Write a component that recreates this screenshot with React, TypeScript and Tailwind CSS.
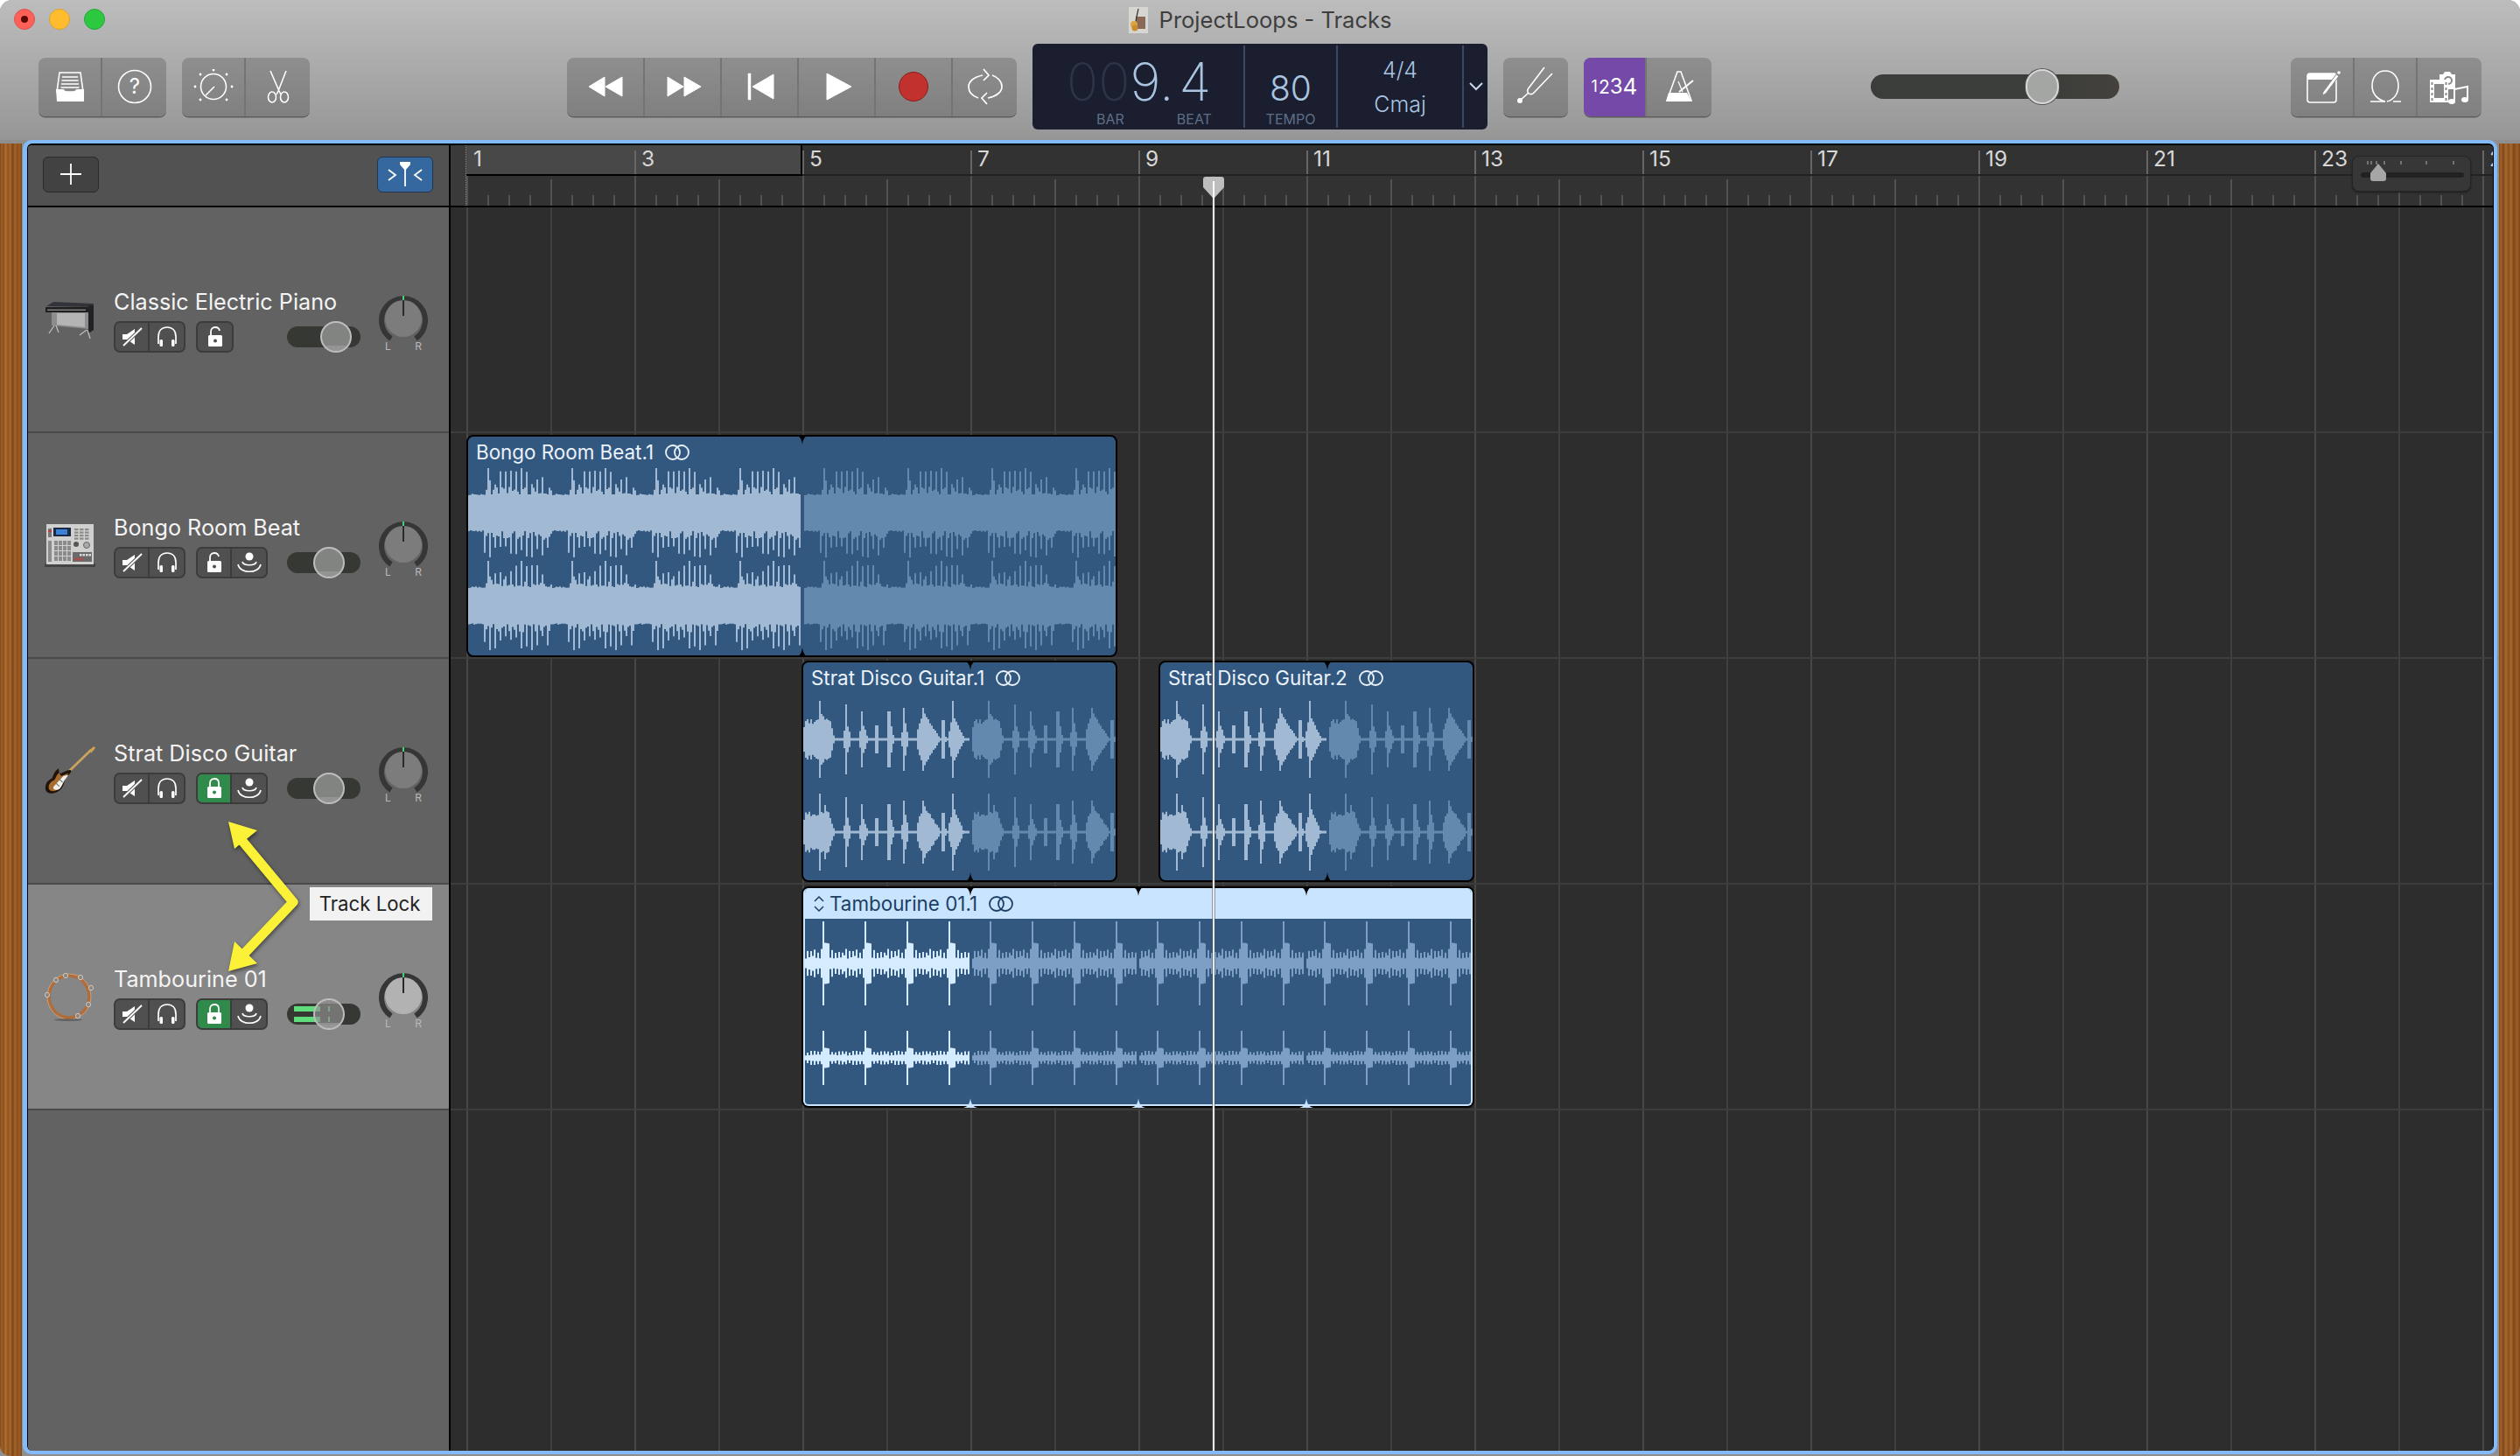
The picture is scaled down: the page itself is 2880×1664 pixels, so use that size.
import React from 'react';

type Profile = { up: number; down: number }[];

const rng = (seed: number) => {
  let s = seed;
  return () => {
    s = (s * 16807) % 2147483647;
    return s / 2147483647;
  };
};

const bongoProfile = (seed: number): Profile => {
  const r = rng(seed);
  const out: Profile = [];
  for (let j = 0; j < 48; j++) {
    const px = j * 2;
    const notch = px < 20 || (px > 66 && px < 72) || (px > 86 && px < 92);
    const lowNotch = px < 18 || (px > 62 && px < 66);
    const comb = j % 3 === 0;
    let up = notch ? 20 + r() * 2 : comb ? 32 + r() * 16 : 21 + r() * 9;
    let down = lowNotch ? 20 + r() * 2 : comb ? 34 + r() * 16 : 21 + r() * 10;
    if (px === 22 || px === 60) up = 51;
    if (px === 24 || px === 72) down = 51;
    out.push({ up, down });
  }
  return out;
};

const stratBursts = [
  [0, 36, 27, 44],
  [46, 54, 24, 40],
  [64, 73, 22, 32],
  [82, 86, 10, 16],
  [95, 103, 26, 32],
  [112, 120, 26, 36],
  [130, 156, 30, 36],
  [158, 163, 14, 22],
  [166, 183, 28, 44],
];

const stratProfile = (seed: number): Profile => {
  const r = rng(seed);
  const out: Profile = [];
  for (let j = 0; j < 96; j++) {
    const px = j * 2;
    let amp = 1.5;
    stratBursts.forEach(([a, b, body, peak], n) => {
      if (px >= a && px < b) {
        const t = (px - a) / (b - a);
        // first burst holds its body, the others are sharp attacks with a long tail
        const shape = n === 0
          ? (t < 0.75 ? 0.7 + t * 0.4 : 1 - (t - 0.75) * 3.4)
          : (t < 0.25 ? 0.35 + t * 2.6 : 1 - (t - 0.25) * 1.25);
        amp = Math.max(amp, body * shape + (r() - 0.5) * (n === 0 ? 10 : 4));
        if (Math.abs(t - (n === 0 ? 0.5 : 0.25)) < 2 / (b - a) / 1.5) amp = peak;
      }
    });
    out.push({ up: amp, down: amp });
  }
  return out;
};

const tambProfile = (seed: number, body: number, spike: number): Profile => {
  const r = rng(seed);
  const out: Profile = [];
  for (let j = 0; j < 24; j++) {
    const px = j * 2;
    let amp = j % 2 === 0 ? body * (0.35 + r() * 0.3) : body * (0.75 + r() * 0.35);
    if (px === 20) amp = spike;
    else if (px > 20 && px < 28) amp = Math.max(amp, body * 1.5 - (px - 20) * 0.2);
    out.push({ up: amp, down: amp });
  }
  return out;
};

const wavePath = (p: Profile, step: number, from: number, to: number, cy: number) => {
  let d = '';
  for (let x = from, i = 0; x + step <= to; x += step, i++) {
    const c = p[i % p.length];
    d += `M${x} ${(cy - c.up).toFixed(1)}h${step}V${(cy + c.down).toFixed(1)}h${-step}Z`;
  }
  return d;
};

const Wave = ({ width, height, seg, step, channels, colorA, colorB }: {
  width: number;
  height: number;
  seg: number;
  step: number;
  channels: { p: Profile; cy: number }[];
  colorA: string;
  colorB: string;
}) => (
  <svg className="absolute left-0 top-0" width={width} height={height}>
    {channels.map((c, i) => (
      <g key={i}>
        <path d={wavePath(c.p, step, 0, seg - 1, c.cy)} fill={colorA} />
        {Array.from({ length: Math.ceil((width - seg) / seg) }).map((_, k) => (
          <path
            key={k}
            d={wavePath(c.p, step, seg + 2 + k * (seg + 2), Math.min(width, seg + (k + 1) * (seg + 2)), c.cy)}
            fill={colorB}
          />
        ))}
      </g>
    ))}
  </svg>
);

const LoopRings = ({ color }: { color: string }) => (
  <svg width="30" height="20" viewBox="0 0 30 20" fill="none" stroke={color} strokeWidth="1.8">
    <circle cx="10" cy="10" r="8" />
    <circle cx="20" cy="10" r="8" />
  </svg>
);

const Notch = ({ x, side, color }: { x: number; side: 'top' | 'bottom'; color: string }) => (
  <svg
    className={side === 'top' ? 'absolute -top-[2px]' : 'absolute -bottom-[2px]'}
    style={{ left: x - 8 }}
    width="16"
    height="11"
    viewBox="0 0 16 11"
  >
    {side === 'top' ? <path d="M0 0h16c-4 1-7 3-8 11C7 3 4 1 0 0z" fill={color} /> : <path d="M0 11h16c-4-1-7-3-8-11C7 8 4 10 0 11z" fill={color} />}
  </svg>
);

/* ---------- toolbar icons ---------- */

const InboxIcon = () => (
  <svg width="32" height="34" viewBox="0 0 32 34" fill="none" stroke="white" strokeWidth="1.6">
    <path d="M4 1h24l3 22H1z" />
    <path d="M7 6h18M6.500 10h19M6 14h20M5.500 18h21" />
    <path d="M0 20h9c1 4 13 4 14 0h9v14H1z" fill="white" stroke="none" />
  </svg>
);

const HelpIcon = () => (
  <svg width="40" height="40" viewBox="0 0 40 40" fill="none">
    <circle cx="20" cy="20" r="18.500" stroke="white" strokeWidth="1.6" />
    <text x="20" y="28" textAnchor="middle" fontSize="24" fontFamily="Inter, sans-serif" fill="white">?</text>
  </svg>
);

const DialIcon = () => (
  <svg width="46" height="40" viewBox="0 0 46 40" fill="none" stroke="white">
    <circle cx="23" cy="20" r="14.500" strokeWidth="1.6" />
    <path d="M14 30l10-10" strokeWidth="1.6" />
    {[[23, 1], [8, 6], [38, 6], [2, 20], [44, 20], [8, 35], [38, 35]].map(([x, y], i) => (
      <circle key={i} cx={x} cy={y} r="1.4" fill="white" stroke="none" />
    ))}
  </svg>
);

const ScissorsIcon = () => (
  <svg width="28" height="38" viewBox="0 0 28 38" fill="none" stroke="white" strokeWidth="1.6">
    <path d="M5 1l10 23 2 4M23 1l-9 23-2 4" />
    <ellipse cx="7" cy="31" rx="4.500" ry="6" />
    <ellipse cx="21" cy="31" rx="4.500" ry="6" />
  </svg>
);

const RewindIcon = () => (
  <svg width="40" height="24" viewBox="0 0 40 24" fill="white" stroke="white" strokeLinejoin="round">
    <path d="M1 12L19 1v22z" />
    <path d="M20 12L39 1v22z" />
  </svg>
);

const ForwardIcon = () => (
  <svg className="ml-[3px]" width="40" height="24" viewBox="0 0 40 24" fill="white" stroke="white" strokeLinejoin="round">
    <path d="M1 1l18 11L1 23z" />
    <path d="M20 1l19 11-19 11z" />
  </svg>
);

const ToStartIcon = () => (
  <svg className="ml-[3px]" width="32" height="32" viewBox="0 0 32 32" fill="white" stroke="white" strokeLinejoin="round">
    <rect x="1" y="1" width="3" height="30" strokeWidth="0.5" />
    <path d="M6 16L30 2v28z" />
  </svg>
);

const PlayIcon = () => (
  <svg className="ml-[5px]" width="30" height="32" viewBox="0 0 30 32" fill="white" stroke="white" strokeLinejoin="round">
    <path d="M1 1l28 15L1 31z" />
  </svg>
);

const CycleIcon = () => (
  <svg width="40" height="42" viewBox="0 0 40 42" fill="none" stroke="white" strokeWidth="1.7">
    <path d="M17 8C7 10 1 15 1 21c0 7 5 11 11 13" />
    <path d="M23 34c10-2 16-7 16-13 0-6-5-11-11-13" />
    <path d="M18 1l6 7-6 6M22 28l-6 6 6 7" />
  </svg>
);

const ForkIcon = () => (
  <svg className="ml-[5px]" width="50" height="46" viewBox="0 0 50 46" fill="none" stroke="white" strokeWidth="1.6">
    <path d="M13 26L32 1M19 31L41 8" />
    <path d="M13 26c-1 4 2 7 6 5" />
    <path d="M14 30l-9 8" />
    <circle cx="4" cy="39" r="3" fill="white" stroke="none" />
  </svg>
);

const MetronomeIcon = () => (
  <svg className="ml-[2px]" width="32" height="36" viewBox="0 0 32 36" fill="none" stroke="white" strokeWidth="1.6">
    <path d="M13 1h4l12 33H1z" />
    <path d="M0 35l3-10h21l5 10z" fill="white" stroke="none" />
    <path d="M15 24l16-13" strokeWidth="2" />
    <path d="M14 12l5 12" strokeWidth="1.2" />
  </svg>
);

const NoteIcon = () => (
  <svg className="ml-[5px]" width="40" height="38" viewBox="0 0 40 38" fill="none" stroke="white" strokeWidth="1.6">
    <rect x="1" y="4" width="33" height="33" rx="3" />
    <path d="M1 7a3 3 0 013-3h26a4 4 0 014 3v4H1z" fill="white" stroke="none" />
    <path d="M19 25l15-20 3 2-15 20-4 2z" fill="white" stroke="#888" strokeWidth="1" />
    <circle cx="37" cy="3" r="1.8" fill="white" stroke="none" />
  </svg>
);

const LoopsIcon = () => (
  <svg className="ml-[2px]" width="38" height="38" viewBox="0 0 38 38" fill="none" stroke="white" strokeWidth="1.6">
    <path d="M18 36C9 34 3 27 3 18 3 8 9 1 18 1s15 7 15 17c0 9-5 16-13 18" />
    <path d="M1 36h17M27 36h9" />
  </svg>
);

const MediaIcon = () => (
  <svg className="-ml-[2px]" width="46" height="40" viewBox="0 0 46 40" fill="none">
    <path d="M12 6h4l2-3h6l2 3h4v17H12z" fill="white" />
    <circle cx="22" cy="13" r="5" fill="#8a8a8a" />
    <circle cx="22" cy="13" r="3" fill="white" />
    <path d="M1 12h21v26H1z" fill="white" />
    <rect x="6" y="17" width="11" height="16" fill="#8a8a8a" />
    <path d="M2.500 15h2v3h-2zM2.500 21h2v3h-2zM2.500 27h2v3h-2zM2.500 33h2v3h-2zM18.500 15h2v3h-2zM18.500 21h2v3h-2zM18.500 27h2v3h-2zM18.500 33h2v3h-2z" fill="#8a8a8a" />
    <path d="M29 23l15-3v15" stroke="white" strokeWidth="2" />
    <path d="M29 23v14" stroke="white" strokeWidth="2" />
    <ellipse cx="26" cy="37" rx="4" ry="3" fill="white" />
    <ellipse cx="41" cy="35" rx="4" ry="3" fill="white" />
  </svg>
);

const DocIcon = () => (
  <svg width="22" height="30" viewBox="0 0 22 30">
    <rect width="22" height="30" fill="#d8d6d2" />
    <rect x="8" y="11" width="11" height="14" fill="#8a6a55" />
    <path d="M11 2L8 16" stroke="#333" strokeWidth="1.2" />
    <circle cx="6" cy="20" r="4" fill="#d9a441" />
    <circle cx="7" cy="24" r="3.500" fill="#c98c2e" />
  </svg>
);

/* ---------- track icons ---------- */

const MuteIcon = () => (
  <svg width="24" height="22" viewBox="0 0 24 22" fill="white">
    <path d="M1 8h5l9-6v18l-9-6H1z" />
    <path d="M2 21L23 1" stroke="#555" strokeWidth="4" />
    <path d="M2 21L23 1" stroke="white" strokeWidth="1.8" />
  </svg>
);

const HeadphonesIcon = () => (
  <svg width="24" height="24" viewBox="0 0 24 24" fill="none" stroke="white" strokeWidth="1.7">
    <path d="M2 20v-8C2 5 6 1 12 1s10 4 10 11v8" />
    <rect x="3.500" y="15" width="3.500" height="8" rx="1.500" fill="white" stroke="none" />
    <rect x="17" y="15" width="3.500" height="8" rx="1.500" fill="white" stroke="none" />
  </svg>
);

const LockIcon = ({ open, dot }: { open: boolean; dot: string }) => (
  <svg width="18" height="24" viewBox="0 0 18 24" fill="none">
    <path d={open ? 'M4 11V6c0-3 2-5 5-5 2.500 0 4.500 1.500 5 4' : 'M4 11V6c0-3 2-5 5-5s5 2 5 5v5'} stroke="white" strokeWidth="1.8" />
    <rect x="1" y="10" width="16" height="13" rx="1.500" fill="white" />
    <circle cx="9" cy="16.500" r="2" fill={dot} />
  </svg>
);

const InputIcon = () => (
  <svg width="28" height="24" viewBox="0 0 28 24" fill="none" stroke="white" strokeWidth="1.6">
    <circle cx="14" cy="5" r="4.500" fill="white" stroke="none" />
    <path d="M6 11c1 5 15 5 16 0" />
    <path d="M1 14c2 11 24 11 26 0" />
  </svg>
);

const PianoIcon = () => (
  <svg width="58" height="44" viewBox="0 0 58 44">
    <path d="M2 6L10 1l46 2v4z" fill="#33343a" />
    <path d="M1 7h55v6H1z" fill="#1f1f22" />
    <path d="M3 9.500h44v1.500H3z" fill="#7f7f7f" />
    <path d="M8 13h42v19L8 28z" fill="#8d8d8d" />
    <path d="M14 14h32v16l-32-3z" fill="#b4b4b4" />
    <path d="M50 5h6v28l-6 4z" fill="#222226" />
    <path d="M11 28L5 37M13 28l3 8M49 33l3 10M48 33l-8 6" stroke="#bcbcbc" strokeWidth="1.300" fill="none" />
  </svg>
);

const PadsIcon = () => (
  <svg width="58" height="52" viewBox="0 0 58 52">
    <rect x="0" y="46" width="58" height="4" fill="#444" />
    <rect x="2" y="1" width="54" height="46" fill="#d0d0ce" />
    <rect x="10" y="5" width="20" height="10" fill="#1a2a44" />
    <rect x="13" y="7" width="13" height="6" fill="#3b82d6" />
    <rect x="4" y="6" width="4" height="10" fill="#777" />
    <rect x="4" y="8" width="4" height="2" fill="#c23b3b" />
    <g fill="#8b8b8b">
      {[0, 1, 2, 3].flatMap((r) =>
        [0, 1, 2, 3].map((c) => <rect key={`${r}-${c}`} x={11 + c * 5} y={20 + r * 6} width="4" height="5" />)
      )}
      {[0, 1, 2, 3].flatMap((r) =>
        [0, 1, 2].map((c) => <rect key={`k${r}-${c}`} x={34 + c * 6} y={6 + r * 3.5} width="4.500" height="2.200" />)
      )}
      <rect x="4" y="20" width="4" height="24" />
    </g>
    <circle cx="36" cy="24" r="3" fill="#555" />
    <circle cx="48" cy="25" r="3.500" fill="#aaa" stroke="#666" />
    <rect x="32" y="33" width="22" height="11" fill="#6a6a6a" />
    <g fill="#ddd">
      {[0, 1, 2, 3].map((c) => <rect key={c} x={40 + c * 3.5} y="35" width="2.500" height="2.500" />)}
    </g>
    <g fill="#b44">
      {[0, 1, 2].map((c) => <rect key={c} x={34 + c * 3.5} y="39.500" width="2.500" height="3" />)}
    </g>
  </svg>
);

const GuitarIcon = () => (
  <svg width="64" height="64" viewBox="0 0 64 64">
    <path d="M26 36L58 5" stroke="#c9a35e" strokeWidth="3" />
    <path d="M55 6l6-5 2 2-5 6z" fill="#d0a24f" />
    <path d="M2 52c0-7 4-10 8-12 2-4 3-9 8-12 1 3 0 5 2 6 4-1 9-5 13-4 2 2-3 6-6 9-3 4-1 8-5 13-6 8-20 9-20 0z" fill="#22140c" />
    <path d="M6 51c0-5 4-8 7-9 2-3 3-7 6-9 1 2 1 4 3 4 3-1 6-3 8-3-1 3-5 5-6 8-2 4-1 7-5 10-5 5-13 5-13-1z" fill="#a86c2c" />
    <path d="M12 50l12-13 6-1-5 7-3 6c-2 4-5 6-8 5-2-1-3-2-2-4z" fill="#f1f0ea" />
    <path d="M19 41l4 4M15 46l4 4" stroke="#777" strokeWidth="1.300" />
  </svg>
);

const TambourineIcon = () => (
  <svg width="60" height="56" viewBox="0 0 60 56" fill="none">
    <ellipse cx="29" cy="27" rx="23" ry="24" stroke="#b06c3a" strokeWidth="3.600" />
    <ellipse cx="29" cy="27" rx="25" ry="26" stroke="#d8a67c" strokeWidth="0.800" />
    {[[25, 3], [42, 5], [54, 17], [51, 36], [39, 49], [4, 25], [14, 8]].map(([x, y], i) => (
      <ellipse key={i} cx={x} cy={y} rx="2.500" ry="2.800" fill="#8a8580" stroke="#cfcac2" strokeWidth="1" />
    ))}
    <ellipse cx="28" cy="53.500" rx="16" ry="1.500" fill="#3a3a3a" opacity="0.5" />
  </svg>
);

/* ---------- small pieces ---------- */

const ToolGroup = ({ className, children }: { className: string; children: React.ReactNode }) => (
  <div className={`flex h-[67px] shrink-0 overflow-hidden rounded-[8px] bg-[linear-gradient(#8e8e8e,#808080)] shadow-[0_1.5px_0_#5c5c5c] ${className}`}>
    {children}
  </div>
);

const ToolCell = ({ className, children }: { className: string; children?: React.ReactNode }) => (
  <div className={`flex h-full items-center justify-center border-r-2 border-[#747474] last:border-r-0 ${className}`}>{children}</div>
);

const TrackBtn = ({ active, children }: { active?: boolean; children: React.ReactNode }) => (
  <div className={`flex h-full w-[39px] items-center justify-center border-r-2 border-[#3c3c3c] last:border-r-0 ${active ? 'bg-[#2f8a4c]' : ''}`}>
    {children}
  </div>
);

const BtnGroup = ({ children }: { children: React.ReactNode }) => (
  <div className="flex h-[36px] overflow-hidden rounded-[7px] border-2 border-[#3c3c3c] bg-[#505050]">{children}</div>
);

const PanKnob = ({ light }: { light?: boolean }) => (
  <div className="relative mt-[10px] h-[66px] w-[56px] shrink-0">
    <svg width="56" height="56" viewBox="0 0 56 56">
      <path d="M14 50A25 25 0 1 1 42 50" fill="none" stroke="#363636" strokeWidth="6" />
      <circle cx="28" cy="27" r="21" fill={light ? '#b2b2b2' : '#7c7c7c'} />
      <path d="M28 1v5" stroke="#49d17a" strokeWidth="2" />
      <path d="M28 6v18" stroke="#2a2a2a" strokeWidth="2" />
    </svg>
    <span className="absolute bottom-[1px] left-[7px] text-[12px] leading-none text-[#b9b9b9]">L</span>
    <span className="absolute bottom-[1px] right-[7px] text-[12px] leading-none text-[#b9b9b9]">R</span>
  </div>
);

const tracks = [
  { name: 'Classic Electric Piano', icon: <PianoIcon />, knob: 'left-[38px]', locked: false, input: false, selected: false },
  { name: 'Bongo Room Beat', icon: <PadsIcon />, knob: 'left-[30px]', locked: false, input: true, selected: false },
  { name: 'Strat Disco Guitar', icon: <GuitarIcon />, knob: 'left-[30px]', locked: true, input: true, selected: false },
  { name: 'Tambourine 01', icon: <TambourineIcon />, knob: 'left-[30px]', locked: true, input: true, selected: true },
];

const TrackHeader = ({ t }: { t: (typeof tracks)[number] }) => (
  <div className={`flex h-[258px] items-center border-b-2 border-[#4a4a4a] pl-[18px] ${t.selected ? 'bg-[#868686]' : 'bg-[#626262]'}`}>
    <div className="flex w-[60px] shrink-0 items-center justify-center pt-[2px]">{t.icon}</div>
    <div className="ml-[20px] w-[282px] shrink-0 pt-[2px]">
      <div className="mb-[6px] whitespace-nowrap text-[25.2px] leading-[32px] text-[#f4f4f4]">{t.name}</div>
      <div className="flex items-center">
        <BtnGroup>
          <TrackBtn><MuteIcon /></TrackBtn>
          <TrackBtn><HeadphonesIcon /></TrackBtn>
        </BtnGroup>
        <div className="ml-[12px]">
          <BtnGroup>
            <TrackBtn active={t.locked}><LockIcon open={!t.locked} dot={t.locked ? '#2f8a4c' : '#505050'} /></TrackBtn>
            {t.input && <TrackBtn><InputIcon /></TrackBtn>}
          </BtnGroup>
        </div>
        <div className="relative ml-auto h-[24px] w-[84px] rounded-full bg-[#363834]">
          {t.selected && (
            <div className="absolute left-[8px] top-[3px] flex h-[18px] w-[30px] flex-col justify-between">
              <div className="h-[6px] bg-[#5fdc7b]" />
              <div className="h-[6px] bg-[#5fdc7b]" />
            </div>
          )}
          {t.selected && (
            <div className="absolute left-[47px] top-[3px] flex h-[18px] w-[2px] flex-col justify-between">
              <div className="h-[6px] bg-[#5fdc7b]" />
              <div className="h-[6px] bg-[#5fdc7b]" />
            </div>
          )}
          <div className={`absolute -top-[6px] flex h-[36px] w-[36px] flex-col overflow-hidden rounded-full border-2 border-[#bdbdbd] ${t.knob} ${t.selected ? 'bg-[#8e908e]/70' : 'bg-[#828482]'}`}>
            <div className="mt-auto h-[6px] bg-[#9b9b9b]/70" />
          </div>
        </div>
      </div>
    </div>
    <div className="ml-[21px]">
      <PanKnob light={t.selected} />
    </div>
  </div>
);

const RegionTitle = ({ name, dark }: { name: string; dark?: boolean }) => (
  <div className={`relative flex items-center gap-[12px] whitespace-nowrap pl-[9px] text-[22.4px] leading-[35px] ${dark ? 'text-[#1d3f63]' : 'text-[#eaf2fb]'}`}>
    {dark && (
      <svg width="12" height="18" viewBox="0 0 12 18" fill="none" stroke="#1d3f63" strokeWidth="1.500" className="-mr-[6px] ml-[1px]">
        <path d="M1 6l5-5 5 5M1 12l5 5 5-5" />
      </svg>
    )}
    <span>{name}</span>
    <LoopRings color={dark ? '#1d3f63' : '#eaf2fb'} />
  </div>
);

const Ruler = () => (
  <div className="relative h-[71px] shrink-0 overflow-hidden border-b-2 border-black bg-[#323232]">
    <div className="flex h-full">
      <div className="w-[18px] shrink-0 border-r border-dotted border-[#8a8a8a] bg-[#3a3a3a]" />
      <div className="flex flex-1 flex-col">
        <div className="relative h-[35px] shrink-0 border-b-2 border-[#222]">
          <div className="absolute left-0 top-0 h-[35px] w-[384px] border-b-2 border-r-2 border-black bg-[#484848]" />
          <div className="relative flex h-full">
            {Array.from({ length: 13 }).map((_, i) => (
              <div key={i} className={`mt-[6px] h-[27px] w-[192px] shrink-0 text-[24.5px] leading-[18px] text-[#d8d8d8] ${i === 0 ? 'pl-[8px]' : 'border-l-2 border-[#666] pl-[6px]'}`}>
                {i * 2 + 1}
              </div>
            ))}
          </div>
        </div>
        <svg className="block" width="2316" height="34">
          {Array.from({ length: 25 }).map((_, b) => (
            <g key={b} stroke="#5e5e5e" strokeWidth="1.500">
              <path d={b % 2 === 0 ? `M${b * 96 + 1} 0V34` : `M${b * 96 + 1} 4V34`} />
              <path d={`M${b * 96 + 25} 22V34M${b * 96 + 49} 22V34M${b * 96 + 73} 22V34`} />
            </g>
          ))}
        </svg>
      </div>
    </div>
    <div className="absolute right-[25px] top-[12px] h-[41px] w-[136px] rounded-[8px] border border-[#262626] bg-[#373737] shadow-[0_1px_2px_#1c1c1c]">
      <svg width="134" height="39" viewBox="0 0 134 39">
        <path d="M17 5v4M21 5v4M27 5v4M36 5v4M55 5v4M84 5v4M115 5v4" stroke="#8a8a8a" strokeWidth="1.500" />
        <rect x="9" y="18" width="118" height="6" rx="3" fill="#222" />
        <path d="M29 8l9 11v6a3 3 0 01-3 3H23a3 3 0 01-3-3v-6z" fill="#a6a6a6" />
      </svg>
    </div>
  </div>
);

const bongoA = bongoProfile(11);
const bongoB = bongoProfile(97);
const stratA = stratProfile(5);
const stratB = stratProfile(6);
const tambA = tambProfile(3, 16, 48);
const tambB = tambProfile(8, 8, 31);

const StratRegion = ({ className, name }: { className: string; name: string }) => (
  <div className={`absolute top-[2px] h-[253px] w-[361px] rounded-[8px] border-2 border-black bg-[#33587f] ${className}`}>
    <Wave
      width={357}
      height={249}
      seg={191}
      step={2}
      channels={[{ p: stratA, cy: 88 }, { p: stratB, cy: 194 }]}
      colorA="#a2b9d4"
      colorB="#6489ae"
    />
    <RegionTitle name={name} />
    <Notch x={191} side="top" color="black" />
    <Notch x={191} side="bottom" color="black" />
  </div>
);

export default function App() {
  return (
    <div className="h-[1664px] w-[2880px] overflow-hidden bg-white [font-family:Inter,sans-serif]">
      <div className="flex h-full flex-col overflow-hidden rounded-t-[14px] bg-[#8f8f8f]">
        {/* title bar + toolbar */}
        <div className="h-[160px] shrink-0 bg-[linear-gradient(#bdbdbd,#969696)]">
          <div className="relative flex h-[46px] items-center gap-[16px] pb-[2px] pl-[16px]">
            <div className="flex h-[24px] w-[24px] items-center justify-center rounded-full border border-[#d8534a] bg-[#ff6058]">
              <div className="h-[8px] w-[8px] rounded-full bg-[#5a0a05]" />
            </div>
            <div className="h-[24px] w-[24px] rounded-full border border-[#d9a32e] bg-[#febc2e]" />
            <div className="h-[24px] w-[24px] rounded-full border border-[#27a33a] bg-[#2cc840]" />
            <div className="absolute inset-0 flex items-center justify-center gap-[13px] text-[25.5px] text-[#3e3e3e]">
              <DocIcon />
              <span className="pt-[1px]">ProjectLoops - Tracks</span>
            </div>
          </div>
          <div className="mt-[4px] flex h-[98px] items-center pl-[44px]">
            <ToolGroup className="w-[146px]">
              <ToolCell className="w-[73px]"><InboxIcon /></ToolCell>
              <ToolCell className="w-[73px]"><HelpIcon /></ToolCell>
            </ToolGroup>
            <ToolGroup className="ml-[18px] w-[146px]">
              <ToolCell className="w-[73px]"><DialIcon /></ToolCell>
              <ToolCell className="w-[73px]"><ScissorsIcon /></ToolCell>
            </ToolGroup>
            <ToolGroup className="ml-[294px] w-[514px]">
              <ToolCell className="w-[89px]"><RewindIcon /></ToolCell>
              <ToolCell className="w-[88px]"><ForwardIcon /></ToolCell>
              <ToolCell className="w-[88px]"><ToStartIcon /></ToolCell>
              <ToolCell className="w-[88px]"><PlayIcon /></ToolCell>
              <ToolCell className="w-[88px]"><div className="h-[34px] w-[34px] rounded-full border border-[#8c1f1b] bg-[#c1312d]" /></ToolCell>
              <ToolCell className="w-[73px]"><CycleIcon /></ToolCell>
            </ToolGroup>
            {/* LCD */}
            <div className="ml-[18px] flex h-[98px] w-[520px] shrink-0 rounded-[6px] bg-[#1a1e2e] py-[2px] text-[#a9c4e0]">
              <div className="w-[243px] shrink-0 border-r-2 border-[#3b4a60]">
                <div className="flex h-[71px] items-end pl-[39px] text-[60px] font-extralight leading-[60px]">
                  <span className="text-[#2e3447]">00</span>
                  <span>9.</span>
                  <span className="ml-[6px]">4</span>
                </div>
                <div className="mt-[4px] flex pl-[73px] text-[16px] leading-[18px] text-[#5d6e88]">
                  <span>BAR</span>
                  <span className="ml-[60px]">BEAT</span>
                </div>
              </div>
              <div className="flex w-[106px] shrink-0 flex-col items-center border-r-2 border-[#3b4a60]">
                <div className="mt-[31px] h-[36px] text-[39px] font-light leading-[36px]">80</div>
                <div className="mt-[8px] text-[16px] leading-[18px] text-[#5d6e88]">TEMPO</div>
              </div>
              <div className="flex w-[144px] shrink-0 flex-col items-center border-r-2 border-[#3b4a60]">
                <div className="mt-[13px] text-[25px] font-light leading-[30px]">4/4</div>
                <div className="mt-[9px] text-[25px] font-light leading-[30px]">Cmaj</div>
              </div>
              <div className="flex flex-1 items-center justify-center">
                <svg width="16" height="10" viewBox="0 0 16 10" fill="none" stroke="#c8d8ea" strokeWidth="2"><path d="M1 1l7 7 7-7" /></svg>
              </div>
            </div>
            <ToolGroup className="ml-[18px] w-[74px]">
              <ToolCell className="w-[74px]"><ForkIcon /></ToolCell>
            </ToolGroup>
            <ToolGroup className="ml-[18px] w-[146px]">
              <ToolCell className="w-[72px] bg-[#7449a8]">
                <span className="flex items-center leading-none text-white">
                  <span className="mr-[1px] text-[18px]">1</span>
                  <span className="text-[21px]">2</span>
                  <span className="text-[24px]">3</span>
                  <span className="text-[26px]">4</span>
                </span>
              </ToolCell>
              <ToolCell className="w-[74px]"><MetronomeIcon /></ToolCell>
            </ToolGroup>
            <div className="relative ml-[182px] h-[28px] w-[284px] shrink-0 rounded-full bg-[linear-gradient(90deg,#3a3d39_70%,#45413c)]">
              <div className="absolute -top-[6px] left-[177px] h-[40px] w-[38px] rounded-full border-2 border-[#d8d8d8] bg-[#a4a6a4] shadow-[0_0_0_1px_#555]" />
            </div>
            <ToolGroup className="ml-[196px] w-[218px]">
              <ToolCell className="w-[73px]"><NoteIcon /></ToolCell>
              <ToolCell className="w-[72px]"><LoopsIcon /></ToolCell>
              <ToolCell className="w-[73px]"><MediaIcon /></ToolCell>
            </ToolGroup>
          </div>
        </div>

        {/* main */}
        <div className="flex min-h-0 flex-1">
          <div className="mt-[4px] w-[25px] shrink-0 rounded-bl-[12px] bg-[linear-gradient(90deg,#7e4719,#a2622a_8%,#8a4f1e_16%,#b0702f_26%,#8c5220_36%,#a9692e_47%,#7d4618_58%,#a4652b_68%,#8a4f1e_80%,#9c5d28_90%,#7a4416)]" />
          <div className="mb-[2px] ml-[1px] w-[2828px] shrink-0 rounded-[10px] border-y-[4px] border-l-[5px] border-r-[4px] border-[#83bbfa]">
            <div className="relative flex h-full overflow-hidden rounded-[6px] border-l border-r border-t-2 border-black">
              {/* left column */}
              <div className="flex w-[481px] shrink-0 flex-col bg-[#626262]">
                <div className="flex h-[71px] shrink-0 items-center justify-between border-b-2 border-black bg-[#525252] pb-[3px] pl-[17px] pr-[18px]">
                  <div className="flex h-[41px] w-[64px] items-center justify-center rounded-[6px] border border-[#2b2b2b] bg-[#424242]">
                    <svg width="26" height="26" viewBox="0 0 26 26" stroke="white" strokeWidth="1.800"><path d="M13 1v24M1 13h24" /></svg>
                  </div>
                  <div className="flex h-[41px] w-[64px] items-center justify-center rounded-[6px] border border-[#1f3550] bg-[#35689f]">
                    <svg width="42" height="28" viewBox="0 0 42 28" fill="none" stroke="white" strokeWidth="1.800">
                      <path d="M2 9l8 6-8 6M40 9l-8 6 8 6M21 8v20" />
                      <path d="M15 0h12v3l-6 7-6-7z" fill="white" stroke="none" />
                    </svg>
                  </div>
                </div>
                {tracks.map((t) => <TrackHeader key={t.name} t={t} />)}
              </div>

              {/* right column */}
              <div className="relative flex min-w-0 flex-1 flex-col border-l-2 border-black bg-[#2d2d2d]">
                <Ruler />
                <div className="relative min-h-0 flex-1">
                  <div className="absolute inset-0 flex pl-[18px]">
                    {Array.from({ length: 25 }).map((_, b) => (
                      <div key={b} className={`h-full w-[96px] shrink-0 border-l-2 ${b % 2 === 0 ? 'border-[#484848]' : 'border-[#404040]'}`} />
                    ))}
                  </div>
                  <div className="relative h-[258px] border-b-2 border-[#3d3d3d]" />
                  <div className="relative h-[258px] border-b-2 border-[#3d3d3d]">
                    <div className="absolute left-[18px] top-[2px] h-[254px] w-[744px] rounded-[8px] border-2 border-black bg-[#33587f]">
                      <Wave
                        width={740}
                        height={250}
                        seg={382}
                        step={2}
                        channels={[{ p: bongoA, cy: 87 }, { p: bongoB, cy: 193 }]}
                        colorA="#a2b9d4"
                        colorB="#6489ae"
                      />
                      <RegionTitle name="Bongo Room Beat.1" />
                      <Notch x={382} side="top" color="black" />
                      <Notch x={382} side="bottom" color="black" />
                    </div>
                  </div>
                  <div className="relative h-[258px] border-b-2 border-[#3d3d3d]">
                    <StratRegion className="left-[401px]" name="Strat Disco Guitar.1" />
                    <StratRegion className="left-[809px]" name="Strat Disco Guitar.2" />
                  </div>
                  <div className="relative h-[258px] border-b-2 border-[#3d3d3d]">
                    <div className="absolute left-[401px] top-[2px] h-[253px] w-[769px] rounded-[8px] border-2 border-black">
                      <div className="relative h-full overflow-hidden rounded-[6px] border-x-2 border-b-2 border-[#c8e4ff] bg-[#33587f]">
                        <Wave
                          width={765}
                          height={249}
                          seg={189}
                          step={2}
                          channels={[{ p: tambA, cy: 86 }, { p: tambB, cy: 194 }]}
                          colorA="#d5ebff"
                          colorB="#7d9fc6"
                        />
                        <div className="relative h-[35px] bg-[#c8e4ff]">
                          <RegionTitle name="Tambourine 01.1" dark />
                        </div>
                      </div>
                      {[191, 383, 575].map((x) => (
                        <React.Fragment key={x}>
                          <Notch x={x} side="top" color="black" />
                          <Notch x={x} side="bottom" color="#c8e4ff" />
                        </React.Fragment>
                      ))}
                    </div>
                  </div>
                </div>
                {/* playhead */}
                <div className="absolute bottom-0 left-[871px] top-[36px] w-[2px] bg-[#e8e8e8] shadow-[0_0_0_0.5px_#555]" />
                <svg className="absolute left-[860px] top-[36px]" width="24" height="24" viewBox="0 0 24 24">
                  <path d="M3 0h18a3 3 0 013 3v9L13 24h-2L0 12V3a3 3 0 013-3z" fill="#bdbdbd" />
                  <path d="M12 5v19" stroke="white" strokeWidth="2" />
                </svg>
              </div>

              {/* annotation */}
              <svg className="absolute left-[200px] top-[770px] drop-shadow-[1px_2px_2px_rgba(0,0,0,0.5)]" width="110" height="186" viewBox="0 0 110 186">
                <path d="M29 3L62 13 36 34z" fill="#fbf237" />
                <path d="M29 174L62 165 36 140z" fill="#fbf237" />
                <path d="M44 24L103 95 46 155" fill="none" stroke="#fbf237" strokeWidth="11" strokeLinejoin="round" />
              </svg>
              <div className="absolute left-[322px] top-[848px] flex h-[38px] w-[140px] items-center justify-center bg-[#f2f2f2] pr-[3px] text-[22.2px] text-[#222]">
                Track Lock
              </div>
            </div>
          </div>
          <div className="ml-[2px] mt-[4px] flex-1 rounded-br-[12px] bg-[linear-gradient(90deg,#85491c,#a2622a_10%,#7e4719_20%,#a9692e_33%,#8a4f1e_45%,#a9692e_58%,#7d4618_70%,#9c5d28_85%,#7d4618)]" />
        </div>
      </div>
    </div>
  );
}
